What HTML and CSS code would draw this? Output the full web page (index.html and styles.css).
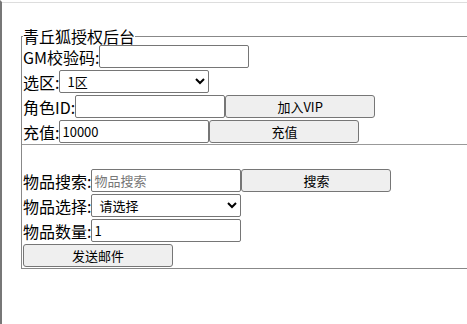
FILE: index.html
```html
<!DOCTYPE html>
<html lang="zh-CN">
<head>
    <meta charset="UTF-8">
    <title>青丘狐授权后台</title>
    <link rel="stylesheet" href="styles.css">
</head>
<body>
    <div class="frame">
        <fieldset class="panel">
            <legend class="panel-title">青丘狐授权后台</legend>

            <div class="row">
                <label>GM校验码:</label>
                <input type="text" class="field">
            </div>
            <div class="row">
                <label>选区:</label>
                <select class="field">
                    <option>1区</option>
                </select>
            </div>
            <div class="row">
                <label>角色ID:</label>
                <input type="text" class="field">
                <button class="btn">加入VIP</button>
            </div>
            <div class="row">
                <label>充值:</label>
                <input type="text" class="field" value="10000">
                <button class="btn">充值</button>
            </div>

            <hr class="sep">

            <div class="row">
                <label>物品搜索:</label>
                <input type="text" class="field" placeholder="物品搜索">
                <button class="btn">搜索</button>
            </div>
            <div class="row">
                <label>物品选择:</label>
                <select class="field">
                    <option>请选择</option>
                </select>
            </div>
            <div class="row">
                <label>物品数量:</label>
                <input type="text" class="field" value="1">
            </div>
            <div class="row">
                <button class="btn">发送邮件</button>
            </div>
        </fieldset>
    </div>
</body>
</html>
```

FILE: styles.css
```css
body {
    margin: 0;
    padding: 0;
    background: #fff;
    font-family: "Noto Sans CJK SC", "Noto Sans", sans-serif;
    overflow: hidden;
}

.frame {
    box-sizing: border-box;
    height: 324px;
    border-top: 2px solid #fff;
    border-left: 2px solid #777;
    box-shadow: inset 0 1px 0 #ddd;
    padding: 26px 0 0 19px;
}

.panel {
    margin: 0;
    padding: 0 0 0 1px;
    border: 1px solid #888;
    border-right: none;
    min-width: 0;
}

.panel-title {
    padding: 0;
    margin-left: 0;
    font-size: 16px;
    line-height: 16px;
    color: #000;
}

.row {
    display: flex;
    align-items: center;
    height: 25px;
    font-size: 16px;
    color: #000;
}

.row label {
    white-space: nowrap;
}

.field {
    box-sizing: border-box;
    width: 150px;
    height: 23px;
    margin: 0;
    padding: 0 2px;
    border: 1px solid #767676;
    border-radius: 2px;
    font-family: "Noto Sans CJK SC", sans-serif;
    font-size: 13px;
    background: #fff;
    color: #000;
}

select.field {
    padding: 0 0 0 3px;
}

.field::placeholder {
    color: #777;
}

.btn {
    box-sizing: border-box;
    width: 150px;
    height: 23px;
    margin: 0;
    padding: 0;
    border: 1px solid #767676;
    border-radius: 3px;
    background: #efefef;
    font-family: "Noto Sans CJK SC", sans-serif;
    font-size: 13px;
    color: #000;
}

.sep {
    margin: 0 0 23px -1px;
    border: none;
    border-top: 1px solid #999;
    height: 0;
}
```
